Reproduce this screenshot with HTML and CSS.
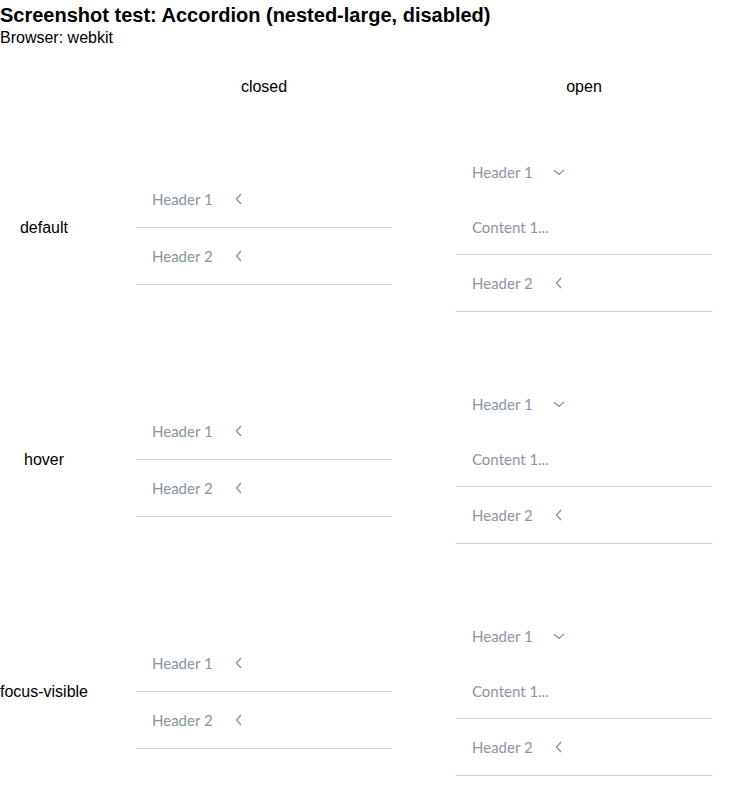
FILE: index.html
```html
<!DOCTYPE html>
<html>
<head>
<meta charset="utf-8">
<link rel="stylesheet" href="styles.css">
</head>
<body>
<h1 class="title">Screenshot test: Accordion (nested-large, disabled)</h1>
<div class="subtitle">Browser: webkit</div>
<div class="grid">
  <div class="colhead"></div>
  <div class="colhead">closed</div>
  <div class="colhead">open</div>

  <div class="rowlabel">default</div>
  <div class="cell">
    <div class="acc">
      <div class="item"><div class="hdr"><span>Header 1</span><svg class="ic" viewBox="0 0 16 16"><path d="M10 3 L5.5 8 L10 13"/></svg></div></div>
      <div class="item"><div class="hdr"><span>Header 2</span><svg class="ic" viewBox="0 0 16 16"><path d="M10 3 L5.5 8 L10 13"/></svg></div></div>
    </div>
  </div>
  <div class="cell">
    <div class="acc">
      <div class="item"><div class="hdr"><span>Header 1</span><svg class="ic" viewBox="0 0 16 16"><path d="M3 6 L8 10.5 L13 6"/></svg></div><div class="content">Content 1...</div></div>
      <div class="item"><div class="hdr"><span>Header 2</span><svg class="ic" viewBox="0 0 16 16"><path d="M10 3 L5.5 8 L10 13"/></svg></div></div>
    </div>
  </div>

  <div class="rowlabel">hover</div>
  <div class="cell">
    <div class="acc">
      <div class="item"><div class="hdr"><span>Header 1</span><svg class="ic" viewBox="0 0 16 16"><path d="M10 3 L5.5 8 L10 13"/></svg></div></div>
      <div class="item"><div class="hdr"><span>Header 2</span><svg class="ic" viewBox="0 0 16 16"><path d="M10 3 L5.5 8 L10 13"/></svg></div></div>
    </div>
  </div>
  <div class="cell">
    <div class="acc">
      <div class="item"><div class="hdr"><span>Header 1</span><svg class="ic" viewBox="0 0 16 16"><path d="M3 6 L8 10.5 L13 6"/></svg></div><div class="content">Content 1...</div></div>
      <div class="item"><div class="hdr"><span>Header 2</span><svg class="ic" viewBox="0 0 16 16"><path d="M10 3 L5.5 8 L10 13"/></svg></div></div>
    </div>
  </div>

  <div class="rowlabel">focus-visible</div>
  <div class="cell">
    <div class="acc">
      <div class="item"><div class="hdr"><span>Header 1</span><svg class="ic" viewBox="0 0 16 16"><path d="M10 3 L5.5 8 L10 13"/></svg></div></div>
      <div class="item"><div class="hdr"><span>Header 2</span><svg class="ic" viewBox="0 0 16 16"><path d="M10 3 L5.5 8 L10 13"/></svg></div></div>
    </div>
  </div>
  <div class="cell">
    <div class="acc">
      <div class="item"><div class="hdr"><span>Header 1</span><svg class="ic" viewBox="0 0 16 16"><path d="M3 6 L8 10.5 L13 6"/></svg></div><div class="content">Content 1...</div></div>
      <div class="item"><div class="hdr"><span>Header 2</span><svg class="ic" viewBox="0 0 16 16"><path d="M10 3 L5.5 8 L10 13"/></svg></div></div>
    </div>
  </div>
</div>
</body>
</html>
```

FILE: styles.css
```css
html, body {
  margin: 0;
  padding: 0;
  background: #ffffff;
}
body {
  font-family: "Liberation Sans", Arial, sans-serif;
  color: #000000;
}
.title {
  margin: 0;
  font-size: 20px;
  line-height: 24px;
  padding-top: 3px;
  font-weight: bold;
}
.subtitle {
  font-size: 16px;
  line-height: 18px;
  margin-top: 2px;
}
.grid {
  display: grid;
  grid-template-columns: 88px 352px 288px;
  grid-template-rows: 50px repeat(3, 232px);
  margin-top: 15px;
}
.colhead {
  font-size: 16px;
  display: flex;
  align-items: center;
  justify-content: center;
}
.rowlabel {
  font-size: 16px;
  display: flex;
  align-items: center;
  justify-content: center;
  white-space: nowrap;
}
.cell {
  display: flex;
  align-items: center;
  justify-content: center;
}
.acc {
  width: 256px;
  font-family: Lato, "Noto Sans", sans-serif;
  font-size: 15px;
  color: #8a95a1;
}
.item {
  border-bottom: 1px solid #c7d3dd;
}
.hdr {
  height: 56px;
  display: flex;
  align-items: center;
  padding-left: 16px;
}
.ic {
  width: 16px;
  height: 16px;
  margin-left: 18px;
  fill: none;
  stroke: #8592a0;
  stroke-width: 1.3;
}
.content {
  height: 54px;
  display: flex;
  align-items: center;
  padding-left: 16px;
}
```
